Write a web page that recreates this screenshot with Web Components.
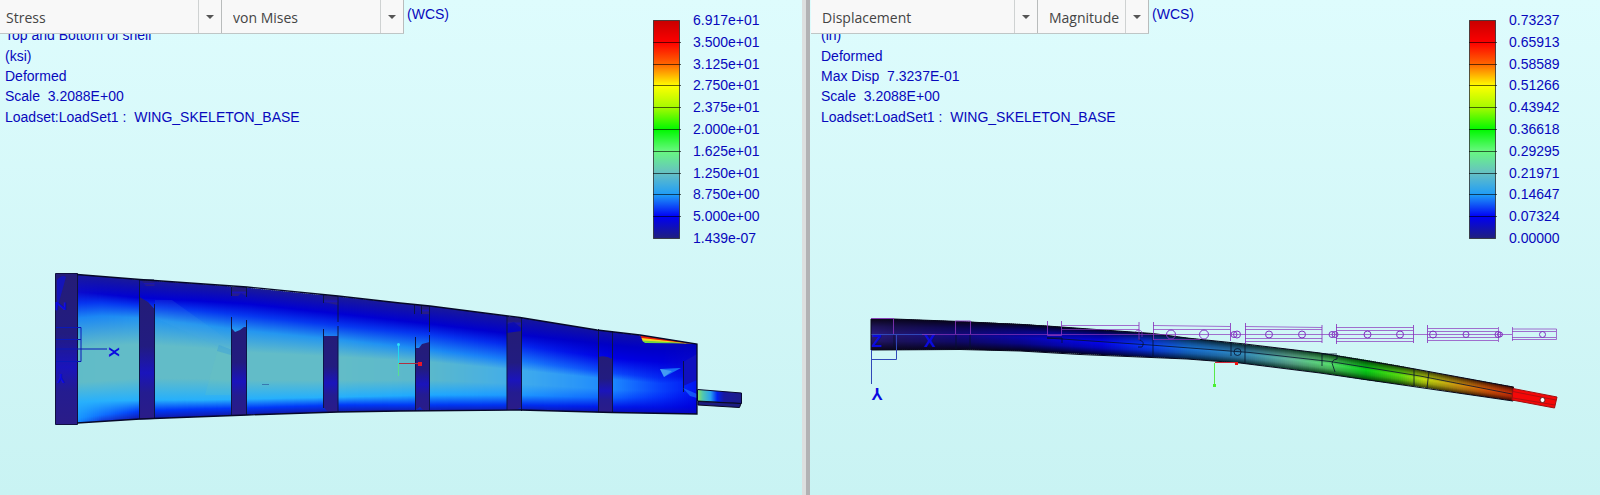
<!DOCTYPE html>
<html lang="en">
<head>
<meta charset="utf-8">
<title>Wing skeleton results</title>
<style>
html,body{margin:0;height:100%}
body{font-family:"Liberation Sans",Arial,sans-serif;font-size:14px;color:#0808bc}
</style>
</head>
<body>
<result-split>
  <result-pane slot="first" style="--inset:5px;--edge:39px">
    <result-select slot="tools" label="Quantity" value="Stress" options="Displacement,Strain" style="--w:222px;--pad:6px"></result-select>
    <result-select slot="tools" label="Component" value="von Mises" options="Max Principal,Min Principal" style="--w:182px"></result-select>
    <span slot="frame">(WCS)</span>
    <result-notes slot="notes" lines="Top and Bottom of shell|(ksi)|Deformed|Scale  3.2088E+00|Loadset:LoadSet1 :  WING_SKELETON_BASE"></result-notes>
    <color-legend slot="legend" values="6.917e+01,3.500e+01,3.125e+01,2.750e+01,2.375e+01,2.000e+01,1.625e+01,1.250e+01,8.750e+00,5.000e+00,1.439e-07"></color-legend>
    <stress-model></stress-model>
  </result-pane>
  <result-pane slot="second" style="--inset:11px;--edge:21px;--lead:1px">
    <result-select slot="tools" label="Quantity" value="Displacement" options="Stress,Strain" style="--w:227px"></result-select>
    <result-select slot="tools" label="Component" value="Magnitude" options="X,Y,Z" style="--w:111px"></result-select>
    <span slot="frame">(WCS)</span>
    <result-notes slot="notes" lines="(in)|Deformed|Max Disp  7.3237E-01|Scale  3.2088E+00|Loadset:LoadSet1 :  WING_SKELETON_BASE"></result-notes>
    <color-legend slot="legend" values="0.73237,0.65913,0.58589,0.51266,0.43942,0.36618,0.29295,0.21971,0.14647,0.07324,0.00000"></color-legend>
    <displacement-model></displacement-model>
  </result-pane>
</result-split>

<script>
class ResultSplit extends HTMLElement {
  constructor() {
    super();
    this.attachShadow({mode: 'open'}).innerHTML = `
      <style>
        :host{display:grid;grid-template-columns:802fr 8px 790fr;min-height:100vh;background:linear-gradient(#defcfd,#c9f3f3)}
        .bar{background:linear-gradient(90deg,#dcdfdf 0 4px,#b2b2b4 4px 8px)}
      </style>
      <slot name="first"></slot><div class="bar"></div><slot name="second"></slot>`;
  }
}
customElements.define('result-split', ResultSplit);

class ResultPane extends HTMLElement {
  constructor() {
    super();
    this.attachShadow({mode: 'open'}).innerHTML = `
      <style>
        :host{display:block;min-width:0}
        .top{display:flex;justify-content:space-between;height:250px}
        header{display:flex;position:relative;z-index:1;padding-left:var(--lead,0)}
        .tools{display:flex;border-bottom:1px solid #bfc6c6}
        .frame{padding:4px 0 0 3px;line-height:20px}
        .notes{margin-top:-9px;padding-left:var(--inset)}
        .legend{padding:9px var(--edge) 0 0}
      </style>
      <div class="top">
        <div>
          <header><div class="tools"><slot name="tools"></slot></div><div class="frame"><slot name="frame"></slot></div></header>
          <div class="notes"><slot name="notes"></slot></div>
        </div>
        <div class="legend"><slot name="legend"></slot></div>
      </div>
      <slot></slot>`;
  }
}
customElements.define('result-pane', ResultPane);

class ResultSelect extends HTMLElement {
  connectedCallback() {
    const value = this.getAttribute('value');
    const options = [value, ...this.getAttribute('options').split(',')];
    this.attachShadow({mode: 'open'}).innerHTML = `
      <style>
        :host{display:grid;grid-template-columns:1fr 23px;box-sizing:border-box;width:var(--w);height:33px;background:#f8f8f8;border-right:1px solid #b9bcbc}
        select{grid-area:1/1/2/3;appearance:none;border:0;margin:0;background:none;padding:1px 24px 0 var(--pad,11px);font:14px "Open Sans","Noto Sans",sans-serif;color:#444;min-width:0}
        .arrow{grid-area:1/2;display:grid;place-items:center;border-left:1px solid #cfd2d2;pointer-events:none}
      </style>
      <select aria-label="${this.getAttribute('label')}">${options.map(o => `<option>${o}</option>`).join('')}</select>
      <span class="arrow"><svg width="8" height="4" viewBox="0 0 8 4"><path d="M0 0h8L4 4z" fill="#555"/></svg></span>`;
  }
}
customElements.define('result-select', ResultSelect);

class ResultNotes extends HTMLElement {
  connectedCallback() {
    this.attachShadow({mode: 'open'}).innerHTML = `
      <style>
        :host{display:flex;flex-direction:column;height:102px}
        div{flex:1;display:flex;align-items:center;white-space:pre}
      </style>${this.getAttribute('lines').split('|').map(l => `<div>${l}</div>`).join('')}`;
  }
}
customElements.define('result-notes', ResultNotes);

class ColorLegend extends HTMLElement {
  connectedCallback() {
    const ticks = Array.from({length: 9}, (_, i) => `M0 ${Math.round((i + 1) * 21.8) + .5}h28`).join('');
    this.attachShadow({mode: 'open'}).innerHTML = `
      <style>
        :host{display:flex;gap:12px;height:240px}
        svg{margin-top:11px;flex:none}
        ol{list-style:none;margin:0;padding:0;width:70px;display:flex;flex-direction:column}
        li{flex:1;display:flex;align-items:center}
      </style>
      <svg width="28" height="220" viewBox="0 0 28 220">
        <linearGradient id="g" x2="0" y2="1">
          <stop stop-color="#c80000"/><stop offset=".1" stop-color="#fc0000"/><stop offset=".2" stop-color="#ff6600"/>
          <stop offset=".3" stop-color="#ffff00"/><stop offset=".4" stop-color="#a4fa00"/><stop offset=".5" stop-color="#00f800"/>
          <stop offset=".6" stop-color="#68f880"/><stop offset=".7" stop-color="#66c0c4"/><stop offset=".8" stop-color="#1e9cf8"/>
          <stop offset=".9" stop-color="#0000f4"/><stop offset="1" stop-color="#20207c"/>
        </linearGradient>
        <rect x=".5" y=".5" width="26" height="218" fill="url(#g)" stroke="#222" stroke-opacity=".75"/>
        <path d="${ticks}" stroke="#000" stroke-opacity=".6"/>
      </svg>
      <ol>${this.getAttribute('values').split(',').map(v => `<li>${v}</li>`).join('')}</ol>`;
  }
}
customElements.define('color-legend', ColorLegend);

/* Builds narrow vertical strips whose gradients blend between key sections.
   A section is [x, [[y, hex], ...]] and all sections have equally many stops. */
function shadeStrips(sections, step) {
  const rgb = h => [1, 3, 5].map(i => parseInt(h.substr(i, 2), 16));
  const mix = (a, b, t) => a + (b - a) * t;
  let defs = '', rects = '';
  for (let k = 0; k < sections.length - 1; k++) {
    const [x0, s0] = sections[k], [x1, s1] = sections[k + 1];
    for (let x = x0; x < x1; x += step) {
      const t = (x - x0) / (x1 - x0), id = 's' + x;
      const ys = s0.map((s, i) => mix(s[0], s1[i][0], t));
      const top = ys[0], h = ys[ys.length - 1] - top;
      defs += `<linearGradient id="${id}" x2="0" y2="1">` + s0.map((s, i) => {
        const a = rgb(s[1]), b = rgb(s1[i][1]);
        return `<stop offset="${((ys[i] - top) / h).toFixed(3)}" stop-color="rgb(${a.map((c, j) => Math.round(mix(c, b[j], t)))})"/>`;
      }).join('') + '</linearGradient>';
      rects += `<rect x="${x}" y="${top.toFixed(1)}" width="${step + 1}" height="${h.toFixed(1)}" fill="url(#${id})"/>`;
    }
  }
  return `<defs>${defs}</defs>${rects}`;
}
const modelStyle = '<style>:host{display:block}svg{display:block;width:100%;height:auto}text{font:bold 15px "Liberation Sans",Arial,sans-serif;fill:#0a0ae0}</style>';

class StressModel extends HTMLElement {
  constructor() {
    super();
    /* The fifth value is the centre of the teal core, which spreads to both sides. */
    const level = (x, ys, cs) => [x, ys.flatMap((y, i) => i === 4
      ? [[y - (y - ys[3]) * .45, cs[4]], [y + (ys[5] - y) * .35, cs[4]]]
      : [[y, cs[i]]])];
    const base = ['#1a1a98', '#0000d4', '#0638f0', '#2496f0', '#62bcc8', '#26b0fc', '#0038f8', '#14149c'];
    const strips = shadeStrips([
      level(77, [274, 292, 303, 318, 372, 402, 418, 424], ['#1a1a98', '#0a0acc', '#0634f0', '#1c88f4', '#60bcc8', '#28b0fc', '#1898ff', '#1080ff']),
      level(101, [276, 294, 303, 316, 370, 401, 415, 422], ['#1a1a98', '#0404d0', '#0638f0', '#1c88f4', '#62bcc8', '#28b0fc', '#1070ff', '#1430d0']),
      level(140, [280, 298, 306, 318, 366, 400, 411, 420], base),
      level(200, [284, 301, 311, 325, 367, 400, 409, 418], base),
      level(248, [288, 304, 316, 331, 370, 399, 408, 416], base),
      level(340, [297, 314, 326, 340, 371, 397, 405, 413], base),
      level(430, [306, 324, 335, 350, 372, 395, 405, 412], ['#1a1a98', '#0000d0', '#0638f0', '#1c8cf4', '#5ab8cc', '#1ea8ff', '#0038f4', '#14149c']),
      level(520, [318, 335, 346, 361, 378, 395, 405, 412], ['#16169c', '#0000cc', '#0428ee', '#1878fa', '#40acec', '#1e98ff', '#0030f0', '#14149c']),
      level(612, [332, 345, 358, 373, 385, 398, 407, 414], ['#1212a0', '#0000c4', '#0000e4', '#0c48fa', '#1c88ff', '#0c60ff', '#0018e8', '#0c0ca8']),
      level(660, [338, 350, 362, 378, 388, 397, 407, 415], ['#0c0cb0', '#0000c8', '#0000dc', '#0428f4', '#0840fc', '#0430fa', '#0010e4', '#0808b4']),
      level(698, [344, 352, 362, 375, 386, 397, 407, 415], ['#0000b8', '#0404c4', '#0808c8', '#0000dc', '#0010f0', '#0008e8', '#0000dc', '#0808b8'])
    ], 2);
    this.attachShadow({mode: 'open'}).innerHTML = `${modelStyle}
      <svg viewBox="0 250 802 245" role="img" aria-label="Stress on the wing">
        <clipPath id="wing"><path d="M77 274.500L140 279.500 247 287 338 296 400 303 430 306 520 317.500 597 330 640 335 697 344V414L612 412.500 521 410 400 411 338 412 247 415 140 419 77 423Z"/></clipPath>
        <linearGradient id="rib" x2="0" y2="1"><stop stop-color="#241c78"/><stop offset=".4" stop-color="#221c80"/><stop offset=".62" stop-color="#1a14bc"/><stop offset=".78" stop-color="#241c90"/><stop offset="1" stop-color="#2a1c88"/></linearGradient>
        <linearGradient id="tip"><stop stop-color="#90e060"/><stop offset=".12" stop-color="#50c8b0"/><stop offset=".3" stop-color="#28a0f0"/><stop offset=".45" stop-color="#0020f0"/><stop offset=".6" stop-color="#1818a0"/><stop offset="1" stop-color="#1c1c88"/></linearGradient>
        <g clip-path="url(#wing)">
          ${strips}
          <path d="M155 300L172 300 231 342V352L155 318Z" fill="#50b0e8" opacity=".12"/>
          <path d="M219 345L232 350 231 355 217 351Z" fill="#2890e8" opacity=".4"/>
          <path d="M219 345L205 395 231 395V350Z" fill="#70c8b8" opacity=".15"/>
          <path d="M262 384.500h7" stroke="#3878b0" fill="none"/>
          <path d="M660 369L681 368 664 377Z" fill="#1870f8"/><path d="M660 369L672 371 664 377Z" fill="#60b8f0" opacity=".6"/>
          <path d="M683 362L697 354V380L683 386Z" fill="#1010c0"/>
          <path d="M683.500 361V392" stroke="#081048"/>
          <path d="M683 388L697 394V398L690 396Z" fill="#2080ff" opacity=".6"/>
          <path d="M640 335L697 343.500 684 343.500 643 341Z" fill="#e81c08"/>
          <path d="M641.500 338L690 343.500H697L643 341.500Z" fill="#f8d820"/>
          <path d="M642 340.500L693 343.500 645 343Z" fill="#70d840"/>
        </g>
        <path d="M55.500 273.500H77.500V424.500H55.500Z" fill="url(#rib)" stroke="#101040"/>
        <path d="M57 280q5-6 9-3l-7 25-2 8z" fill="#1414b8"/>
        <g fill="url(#rib)">
          <path d="M139.500 297L148 302 154.500 309V419L139.500 419.500Z"/><path d="M139.500 280L154.500 281V286H146L142 281Z"/>
          <path d="M231.500 328L235 332 240 330 244 327 246.500 327V415H231.500Z"/><path d="M231.500 287H246.500V296L241 293 238 296H231.500Z"/>
          <path d="M323.500 336H338V412H328L323.500 407Z"/><path d="M323.500 295L338 296V305L323.500 302Z"/>
          <path d="M415.500 348H419L422 344 429.500 342V410H423L420 407 415.500 410Z"/><path d="M415.500 305L429.500 306V314H422L420 307Z"/>
          <path d="M507 333L521.500 331V407L516 410H507Z"/><path d="M507 317L521.500 318V328L514 322 507 324Z"/>
          <path d="M598.500 357Q605 355 612.500 359V412H598.500Z"/>
        </g>
        <path d="M139.500 279V419M154.500 304V419M231.500 317V415M246.500 320V415M231.500 287V296M246.500 287V297M323.500 329V408M338 296V322M338 326V412M323.500 295V303M415.500 337V411M429.500 306V332M429.500 335V411M414.500 305V314M421.500 305V314M507 316V410M521.500 318V411M598.500 329V412M612.500 331V413M139.500 280H154" stroke="#0c1448" fill="none"/>
        <path d="M77 274.500L140 279.500 247 287 338 296 400 303 430 306 520 317.500 597 330 640 335 697 344V414L612 412.500 521 410 400 411 338 412 247 415 140 419 77 423" stroke="#060828" fill="none" stroke-width="1.300"/>
        <path d="M697.500 389.500L741.500 393V403.500L697.500 401Z" fill="url(#tip)" stroke="#080830"/>
        <path d="M698 401.500L741 403.500 739.500 407.500 698 405Z" fill="#1c1c80" stroke="#080820"/>
        <path d="M56 349H107M56 327.500H81V361.500H56M56 339.500H81" stroke="#0a18b8" fill="none"/>
        <text x="114" y="352" transform="rotate(90 114 352)" text-anchor="middle" dy="5">X</text>
        <text x="61" y="306" transform="rotate(90 61 306)" text-anchor="middle" dy="5">Z</text>
        <text x="61" y="379" transform="rotate(180 61 379)" text-anchor="middle" dy="5" style="font-size:12px">Y</text>
        <path d="M398.500 344V363" stroke="#20d8f0"/><path d="M398.500 363V376" stroke="#58e090"/><circle cx="398.500" cy="344.500" r="1.500" fill="#30e0f8"/>
        <path d="M399 363.500H420" stroke="#b03040"/><rect x="418" y="362" width="4" height="4" fill="#e81828"/>
      </svg>`;
  }
}
customElements.define('stress-model', StressModel);

class DisplacementModel extends HTMLElement {
  constructor() {
    super();
    const shade = (hex, f) => '#' + [1, 3, 5].map(i => Math.round(parseInt(hex.substr(i, 2), 16) * f).toString(16).padStart(2, '0')).join('');
    const key = (x, top, bottom, edge, mid) => {
      const h = bottom - top;
      return [x, [[top, edge], [top + h * .25, shade(mid, .7)], [top + h * .5, mid], [top + h * .72, shade(mid, .8)], [bottom, edge]]];
    };
    const strips = shadeStrips([
      key(871, 319, 350, '#0c0618', '#2c1c80'), key(895, 319, 350, '#08041c', '#221670'),
      key(961, 321.5, 349.5, '#08041c', '#120a80'), key(1021, 324, 351, '#04021c', '#0a06a8'),
      key(1061, 327, 353, '#02021c', '#0606d0'), key(1101, 330, 355, '#020228', '#0404ec'),
      key(1145, 333, 357, '#02083c', '#0838fc'), key(1187, 338, 359, '#04203c', '#1670d8'),
      key(1239, 344, 363, '#082830', '#3088bc'), key(1289, 349.5, 369, '#103c2c', '#62b89c'),
      key(1327, 354, 374, '#083c14', '#58dc70'), key(1365, 360, 380, '#043c08', '#08d018'),
      key(1399, 366, 384.5, '#143808', '#58dc10'), key(1423, 371, 387.5, '#3c4408', '#c0dc10'),
      key(1457, 377, 393, '#3c2404', '#cc9410'), key(1485, 382, 397, '#3c1404', '#d85808'), key(1513, 387, 401, '#3c0804', '#cc2808')
    ], 2);
    const ring = (x, r) => `<circle cx="${x}" cy="334.500" r="${r}"/>`;
    this.attachShadow({mode: 'open'}).innerHTML = `${modelStyle}
      <svg viewBox="810 250 790 245" role="img" aria-label="Displacement of the wing">
        ${strips}
        <path d="M871 319H894L960 321.500 1047 326 1153 333.500 1187 338 1245 344 1320 353 1415 369 1513 387V401L1413 386.500 1320 373 1240 363 1187 359 1080 354.500 1020 351 960 349.500 871 350Z" fill="none" stroke="#08081c"/>
        <path d="M1513 388.500L1557 397 1554.500 408 1512 400Z" fill="#f40808" stroke="#a01010"/>
        <path d="M1513 391.500L1556 400M1513 398L1555 405" stroke="#b01010"/><circle cx="1542.500" cy="400" r="2.500" fill="#fff" stroke="#702020"/>
        <g fill="none" stroke="#06122c" stroke-opacity=".8">
          <path d="M1047 338L1150 345 1250 352.500 1330 361.500 1420 376 1512 394M894 334V349M956 334V349M970 334V349M1047 338H1062V343M1138 339q8 3 4 8h-4M1153 333V356M1231 342V356M1245 343V363M1322 366V354H1337M1337 355V359q-7 1-4 7l2 6M1414 369V386M1429 371L1427 388"/>
          <circle cx="1237.500" cy="352" r="3.500"/>
        </g>
        <path d="M871.500 350V384M871.500 359.500H896.500V334M871.500 334.500H935" fill="none" stroke="#3048b8"/>
        <g fill="none" stroke="#8a35bc" stroke-opacity=".85">
          <path d="M871 318.500H893.500V334M955.500 334V321H970.500V334M1047.500 321V335.500H1061.500V321M1139 322V340M1153.500 322V340M1230.500 323V341M1245.500 323V344M1322 325V343M1336.500 324V344M1413.500 325V343M1427.500 325V343"/>
        </g>
        <g fill="none" stroke="#8a35bc" stroke-opacity=".7">
          <path d="M922 334.500H1498M1062 325.500H1139M1062 329.500H1139M1153 325.500L1230 326.500M1153 329.500H1230M1153 339.500H1200M1245 326.500L1322 327.500M1245 329.500H1322M1245 338.500H1322M1245 341.500H1322M1336 327.500H1413M1336 330.500H1413M1336 338.500H1413M1336 341.500H1413M1428 328.500H1498M1428 331.500H1498M1428 337.500H1498M1428 340.500H1498M1498.500 327V342M1498 334.500H1512M1512.500 327V341M1512 329H1556.500V339.500H1512M1512 331.500H1556M1512 337.500H1556M1135 332q4-4 7 0v5"/>
        </g>
        <g fill="none" stroke="#8030c0">
          ${ring(1171, 4.5)}${ring(1204, 4.5)}${ring(1234, 3)}${ring(1237, 3.5)}${ring(1269, 3.5)}${ring(1302, 3.5)}${ring(1332, 3)}${ring(1335, 3)}${ring(1367.5, 3.5)}${ring(1400, 3.5)}${ring(1433, 3.5)}${ring(1466, 3)}${ring(1498, 3)}${ring(1500, 2.5)}${ring(1542.5, 3)}
        </g>
        <text x="877" y="341" text-anchor="middle" dy="6" style="font-size:17px">Z</text>
        <text x="930" y="341" text-anchor="middle" dy="6" style="font-size:17px">X</text>
        <text x="877" y="394" transform="rotate(180 877 394)" text-anchor="middle" dy="6" style="font-size:17px">Y</text>
        <path d="M1214.500 363V385" stroke="#58e848"/><rect x="1213" y="384" width="3" height="3" fill="#48f030"/>
        <path d="M1215 362.500H1236" stroke="#d02838"/><rect x="1235" y="362" width="3" height="3" fill="#f01010"/>
      </svg>`;
  }
}
customElements.define('displacement-model', DisplacementModel);
</script>
</body>
</html>
